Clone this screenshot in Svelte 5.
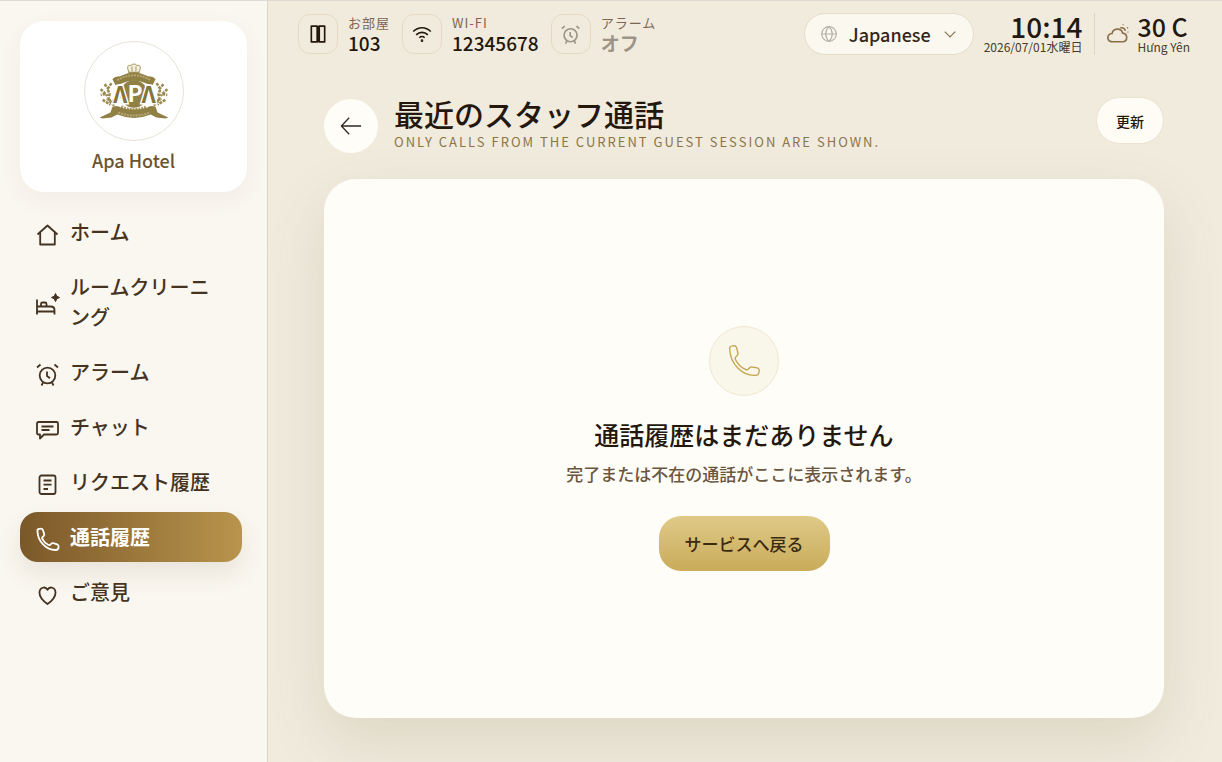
<script lang="ts">
	const navItems = [
		{ icon: 'home', label: 'ホーム' },
		{ icon: 'bed', label: 'ルームクリーニング' },
		{ icon: 'alarm', label: 'アラーム' },
		{ icon: 'chat', label: 'チャット' },
		{ icon: 'list', label: 'リクエスト履歴' },
		{ icon: 'phone', label: '通話履歴' },
		{ icon: 'heart', label: 'ご意見' },
	];

	const stats = [
		{ icon: 'door', label: 'お部屋', value: '103', off: false },
		{ icon: 'wifi', label: 'WI-FI', value: '12345678', off: false },
		{ icon: 'alarm', label: 'アラーム', value: 'オフ', off: true },
	];

	const languages = ['Japanese', 'English', 'Vietnamese'];

	let active = $state('phone');
	let language = $state('Japanese');
</script>

{#snippet icon(name: string)}
	<svg class="icon" viewBox="0 0 24 24" aria-hidden="true">
		{#if name === 'home'}
			<path d="M1.500 12.500 11.500 3.500l10 9M4.200 10.500v12h14.600v-12" />
		{:else if name === 'bed'}
			<path d="M1 7.500v15M18.500 22.500v-4.500c0-2.500-1.500-3.500-4-3.500H1M5 14V12q0-1.500 1.500-1.500h2.500q1.500 0 1.500 1.500v2M1 19.500h17" />
			<path class="solid" d="M19.500 1.500 20.800 4.200 23.500 5.500 20.800 6.800 19.500 9.500 18.200 6.800 15.500 5.500 18.200 4.200z" stroke-width="1" />
		{:else if name === 'alarm'}
			<circle cx="11.500" cy="13.500" r="7.800" />
			<path d="M11 9.500v4.500l3 2.200M1 5.500l3.500-3M18.500 2.500l3.500 3M7 20.500l-1.500 3M16 20.500l1.500 3" />
		{:else if name === 'chat'}
			<path d="M2.500 5h18q1.500 0 1.500 1.500v9.500q0 1.500-1.500 1.500H8L4 21.500v-4H2.500q-1.500 0-1.500-1.500V6.500Q1 5 2.500 5zM5.500 9.500h12M5.500 13h8" />
		{:else if name === 'list'}
			<rect x="3.500" y="3.500" width="16" height="18.500" rx="2" />
			<path d="M7.500 8.500h8M7.500 12.700h8M7.500 17h4.500" />
		{:else if name === 'phone'}
			<path d="M1.500 4.200C1.200 2.500 2 2 3.500 1.800 5.500 1.500 6.500 1.500 7 3.200L8.200 7c.4 1.600-.5 2.200-1.500 3-.8.700-.7 1.300-.2 2.200 1.300 2.500 3 4.300 5.600 5.600.9.500 1.500.6 2.200-.2.800-1 1.500-1.900 3-1.500l3.900 1.200c1.500.5 1.500 1.200 1.400 2.800-.2 2-1 2.800-2.700 2.900C10 23.200 1.700 14 1.500 4.200z" />
		{:else if name === 'phone-thin'}
			<path d="M1.300 3.200C1 1.500 2 .9 3.500.7 5 .4 6 .5 6.400 2L7.500 6c.3 1.500-.6 2-1.600 2.800-.8.7-.7 1.300-.2 2.200 1.500 3.200 4 5.700 7.300 7.300.9.500 1.500.6 2.200-.2.800-1 1.300-1.900 2.800-1.600l4 .6c1.600.3 1.500 1.500 1.300 3-.2 1.700-.8 2.600-2.500 2.700C10.500 23.500 1.700 14 1.300 3.200z" />
		{:else if name === 'heart'}
			<path d="M11.500 22C6.500 18.500 3.500 15 3.500 10.700c0-5.500 6-6.700 8-3 2-3.700 8-2.500 8 3 0 4.300-3 7.800-8 11.300z" />
		{:else if name === 'door'}
			<path d="M4 2.500h7v19H4zM13.500 2.500H20v19h-6.500zM12.200 2v20" />
		{:else if name === 'wifi'}
			<path d="M1.500 9C7.500 3 16.500 3 22.500 9M5 13c4-4 10-4 14 0M8.800 16.500c2-2 4.400-2 6.400 0" />
			<circle class="solid" cx="12" cy="20" r="0.600" />
		{:else if name === 'globe'}
			<circle cx="12" cy="12" r="11" />
			<path d="M1 12h22M12 1c-6.500 6-6.500 16 0 22M12 1c6.500 6 6.500 16 0 22" />
		{:else if name === 'chevron'}
			<path d="m3 8 9 9 9-9" />
		{:else if name === 'cloud'}
			<path d="M6.500 20.500c-7 0-7.500-8.500-1-9 1-6 10-6.500 11.500-.5 6 .5 6 9.500 0 9.500zM14.500 5.500c2.500-1 5 .5 5.500 3M17.500 1.500v1M22 5.500l.8-.6M22.500 10h.8" />
		{:else if name === 'back'}
			<path d="M23 12H1.500M10 3 1.500 12l8.500 9" />
		{/if}
	</svg>
{/snippet}

<div class="page">
	<aside class="sidebar">
		<div class="brand">
			<div class="logo">
				<svg viewBox="0 0 100 100" role="img" aria-label="APA">
					<g class="crown">
						<path d="M45 31c-3-6-1-8 2-7 1-2 5-2 6 0 3-1 5 1 2 7z" />
						<path d="M48 25v5M52 25v5M44 31h12" />
					</g>
					<path class="band" d="M28 38q2-3 8-3 14-8 28 0 6 0 8 3l-3 6q-5-1-7-2-12-5-24 0-2 1-7 2z" />
					<path class="stitch" d="M33 39q17-10 34 0" />
					<circle class="gold" cx="50" cy="53" r="14" />
					<path class="leaf" d="M27 42l-4 6 2 5-1 6 6 6M16 48l7 7M18 59l8 5M20 43l4 5M21 53l-5 1M30 61l-8-3M73 42l4 6-2 5 1 6-6 6M84 48l-7 7M82 59l-8 5M80 43l-4 5M79 53l5 1M70 61l8-3" />
					<path class="lace" d="M37 66q13 6 26 0" />
					<path class="band" d="M28 66q5-2 9 1 13 4 26 0 4-3 9-1l2 6 11 5-3 1-9-1-6-3q-17 7-34 0l-6 3-9 1-3-1 11-5z" />
					<path class="stitch" d="M34 72q16 6 32 0" />
					<text class="side" x="36" y="62" text-anchor="middle">Λ</text>
					<text class="side" x="65" y="62" text-anchor="middle">Λ</text>
					<text class="mid" x="51" y="61" text-anchor="middle">P</text>
				</svg>
			</div>
			<span class="brand-name">Apa Hotel</span>
		</div>
		<nav>
			{#each navItems as item}
				<a
					href="#{item.icon}"
					class="nav-item"
					class:active={active === item.icon}
					onclick={() => (active = item.icon)}
				>
					{@render icon(item.icon)}
					<span>{item.label}</span>
				</a>
			{/each}
		</nav>
	</aside>

	<div class="main">
		<header class="topbar">
			<div class="stats">
				{#each stats as stat}
					<div class="stat" class:off={stat.off}>
						<div class="tile">{@render icon(stat.icon)}</div>
						<div class="stat-text">
							<span class="stat-label">{stat.label}</span>
							<span class="stat-value">{stat.value}</span>
						</div>
					</div>
				{/each}
			</div>
			<div class="tools">
				<div class="language">
					{@render icon('globe')}
					<select bind:value={language} aria-label="Language">
						{#each languages as name}
							<option value={name}>{name}</option>
						{/each}
					</select>
					{@render icon('chevron')}
				</div>
				<div class="clock">
					<span class="big">10:14</span>
					<span class="small">2026/07/01水曜日</span>
				</div>
				<div class="weather">
					{@render icon('cloud')}
					<div class="clock place">
						<span class="big">30 C</span>
						<span class="small">Hưng Yên</span>
					</div>
				</div>
			</div>
		</header>

		<main>
			<div class="heading">
				<button class="back" aria-label="Back">{@render icon('back')}</button>
				<div class="titles">
					<h1>最近のスタッフ通話</h1>
					<p>ONLY CALLS FROM THE CURRENT GUEST SESSION ARE SHOWN.</p>
				</div>
				<button class="refresh">更新</button>
			</div>

			<section class="panel">
				<div class="badge">{@render icon('phone-thin')}</div>
				<h2>通話履歴はまだありません</h2>
				<p>完了または不在の通話がここに表示されます。</p>
				<button class="primary">サービスへ戻る</button>
			</section>
		</main>
	</div>
</div>

<style>
	:global(body) {
		background: #f1ebde;
	}

	.page {
		display: flex;
		box-sizing: border-box;
		min-height: 100vh;
		border-top: 1px solid #dedad3;
		font-family: 'Noto Sans CJK JP', sans-serif;
		font-weight: 500;
		color: #24180e;
	}

	button, select {
		font-family: inherit;
		font-weight: 500;
		color: inherit;
		cursor: pointer;
	}

	h1, h2, p {
		margin: 0;
	}

	.icon {
		flex: none;
		display: block;
		width: 24px;
		height: 24px;
		fill: none;
		stroke: currentColor;
		stroke-width: 1.8;
		stroke-linejoin: round;
	}

	.icon .solid {
		fill: currentColor;
	}

	.sidebar {
		flex: none;
		box-sizing: border-box;
		width: 268px;
		padding: 20px;
		background: #faf7f0;
		border-right: 1px solid #dfd3c2;
	}

	.brand {
		display: flex;
		flex-direction: column;
		align-items: center;
		gap: 4px;
		padding: 20px 20px 17px;
		margin-bottom: 15px;
		border-radius: 24px;
		background: #fff;
		box-shadow: 0 8px 24px rgba(90, 65, 30, 0.05);
	}

	.logo {
		box-sizing: border-box;
		width: 100px;
		height: 100px;
		border: 1px solid #e8e2d6;
		border-radius: 50%;
	}

	.logo svg {
		display: block;
		width: 100%;
	}

	.logo .gold, .logo .band {
		fill: #918044;
	}

	.logo .leaf {
		fill: none;
		stroke: #9a8a52;
		stroke-width: 2.6;
		stroke-dasharray: 3 1;
	}

	.logo .stitch, .logo .lace {
		fill: none;
		stroke: #b5a875;
		stroke-width: 2;
		stroke-dasharray: 2 1;
	}

	.logo .lace {
		stroke: #a89962;
		stroke-width: 3;
	}

	.logo .crown {
		fill: #f3efe0;
		stroke: #a4965f;
	}

	.logo text {
		font-size: 23px;
		font-weight: 700;
	}

	.logo .side {
		fill: #85743a;
		stroke: #fff;
		stroke-width: 3;
		paint-order: stroke;
	}

	.logo .mid {
		fill: #fff;
	}

	.brand-name {
		font-size: 18px;
		line-height: 30px;
		color: #6b5430;
	}

	nav {
		display: flex;
		flex-direction: column;
		gap: 5px;
		padding-right: 5px;
	}

	.nav-item {
		display: flex;
		align-items: center;
		gap: 10px;
		padding: 10px 16px;
		border-radius: 18px;
		font-size: 20px;
		line-height: 30px;
		color: #443321;
		text-decoration: none;
	}

	.nav-item .icon {
		margin-top: 3px;
	}

	.nav-item.active {
		background: linear-gradient(90deg, #7b5829, #b8944c);
		box-shadow: 0 12px 24px rgba(90, 65, 30, 0.1);
		font-weight: 700;
		color: #fff;
	}

	.main {
		flex: 1;
		min-width: 0;
		display: flex;
		flex-direction: column;
		background: #f1ebde;
	}

	.topbar {
		display: flex;
		align-items: center;
		justify-content: space-between;
		padding: 12px 32px 12px 30px;
	}

	.stats, .stat, .tools, .weather {
		display: flex;
		align-items: center;
	}

	.stats {
		gap: 12px;
	}

	.stat {
		gap: 10px;
	}

	.tile {
		display: grid;
		place-items: center;
		box-sizing: border-box;
		width: 40px;
		height: 40px;
		border: 1px solid #e6d9c2;
		border-radius: 12px;
	}

	.tile .icon {
		width: 20px;
		height: 20px;
		stroke-width: 2;
	}

	.stat-text {
		display: flex;
		flex-direction: column;
	}

	.stat-label {
		font-size: 13px;
		line-height: 18px;
		font-weight: 400;
		letter-spacing: 1px;
		color: #7c6653;
	}

	.stat-value {
		font-size: 19px;
		line-height: 22px;
	}

	.off .icon, .off .stat-value {
		color: #9c9486;
	}

	.off .stat-value {
		font-weight: 700;
	}

	.tools {
		gap: 10px;
	}

	.language {
		display: flex;
		align-items: center;
		box-sizing: border-box;
		height: 42px;
		padding: 0 16px;
		border: 1px solid #e6dcc8;
		border-radius: 21px;
		background: #fbf8ef;
	}

	.language .icon {
		width: 16px;
		height: 16px;
		color: #b5b1a9;
	}

	.language .icon:last-child {
		width: 14px;
		height: 14px;
		color: #8d7650;
		stroke-width: 2.2;
	}

	select {
		appearance: none;
		field-sizing: content;
		padding: 0 12px;
		border: 0;
		background: none;
		font-size: 18px;
		line-height: 30px;
		color: #33261a;
	}

	.clock {
		display: flex;
		flex-direction: column;
		align-items: flex-end;
	}

	.clock.place {
		align-items: flex-start;
	}

	.big {
		font-size: 28px;
		line-height: 26px;
	}

	.place .big {
		font-size: 25px;
	}

	.small {
		font-size: 12px;
		line-height: 16px;
		font-weight: 400;
		color: #4a3b2b;
	}

	.weather {
		gap: 8px;
		padding-left: 12px;
		margin-left: 2px;
		border-left: 1px solid #e0d5c2;
	}

	.weather .icon {
		width: 22px;
		height: 22px;
		color: #8a6f47;
	}

	main {
		flex: 1;
		display: flex;
		flex-direction: column;
		gap: 24px;
		padding: 30px 58px 44px 56px;
	}

	.heading {
		display: flex;
		align-items: center;
		gap: 16px;
	}

	.back {
		display: grid;
		place-items: center;
		width: 54px;
		height: 54px;
		padding: 0;
		border: 0;
		border-radius: 50%;
		background: #fffdf8;
		color: #33291f;
	}

	.back .icon {
		width: 22px;
		height: 22px;
		stroke-width: 1.4;
	}

	.titles {
		flex: 1;
	}

	h1 {
		font-size: 30px;
		line-height: 32px;
		font-weight: 500;
	}

	.titles p {
		font-size: 13px;
		line-height: 26px;
		font-weight: 400;
		letter-spacing: 2px;
		color: #8a7548;
	}

	.refresh {
		align-self: flex-start;
		height: 47px;
		padding: 0 19px;
		border: 1px solid #ebe2d0;
		border-radius: 24px;
		background: #fffcf5;
		font-size: 14px;
	}

	.panel {
		flex: 1;
		display: flex;
		flex-direction: column;
		align-items: center;
		justify-content: center;
		border-radius: 32px;
		background: #fffdf8;
		box-shadow: 0 24px 60px rgba(100, 90, 40, 0.14);
	}

	.badge {
		display: grid;
		place-items: center;
		box-sizing: border-box;
		width: 70px;
		height: 70px;
		border: 1px solid #f0e8d0;
		border-radius: 50%;
		background: #f9f6ea;
		color: #c5a54e;
	}

	.badge .icon {
		width: 32px;
		height: 32px;
		stroke-width: 1;
	}

	h2 {
		margin-top: 20px;
		font-size: 25px;
		line-height: 36px;
		font-weight: 500;
	}

	.panel p {
		margin-top: 8px;
		font-size: 17px;
		line-height: 28px;
		color: #6b5640;
	}

	.primary {
		height: 55px;
		margin-top: 28px;
		padding: 0 26px;
		border: 0;
		border-radius: 22px;
		background: linear-gradient(#dfca88, #c9ab5a);
		font-size: 17px;
		color: #3a2a10;
	}
</style>
